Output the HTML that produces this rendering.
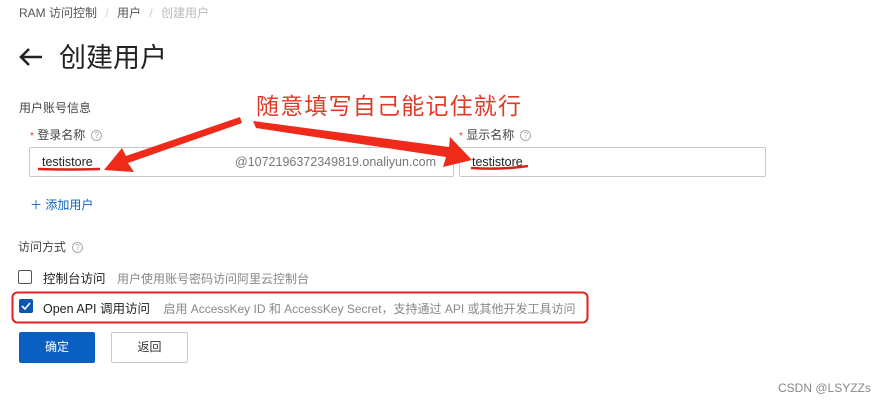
<!DOCTYPE html>
<html><head><meta charset="utf-8"><style>
body{margin:0;width:889px;height:403px;background:#fff;font-family:"Liberation Sans","Noto Sans CJK SC",sans-serif;position:relative;overflow:hidden;color:#333}
.a{position:absolute;white-space:nowrap}
.q{display:inline-block;width:9px;height:9px;border:1px solid #aaa;border-radius:50%;font-size:8px;line-height:9px;text-align:center;color:#aaa;vertical-align:middle;margin-left:6px}
.inp{position:absolute;border:1px solid #c8c8c8;border-radius:2px;height:30px;box-sizing:border-box}
</style></head><body>
<div class="a" style="left:19px;top:4px;font-size:12px;color:#555">RAM 访问控制 <span style="color:#ccc;margin:0 5px">/</span> 用户 <span style="color:#ccc;margin:0 5px">/</span> <span style="color:#bbb">创建用户</span></div>
<svg class="a" style="left:18px;top:46px" width="26" height="22" viewBox="0 0 26 22"><path d="M24 11H3M11 3L3 11l8 8" stroke="#222" stroke-width="2.6" fill="none"/></svg>
<div class="a" style="left:59px;top:36px;font-size:27px;color:#222">创建用户</div>
<div class="a" style="left:19px;top:99px;font-size:12px;color:#444">用户账号信息</div>
<div class="a" style="left:256px;top:87px;font-size:23px;color:#e03a26;letter-spacing:1.2px">随意填写自己能记住就行</div>
<div class="a" style="left:30px;top:126px;font-size:12px;color:#444"><span style="color:#e03a26;font-size:10px">*</span> 登录名称<span class="q">?</span></div>
<div class="a" style="left:459px;top:126px;font-size:12px;color:#444"><span style="color:#e03a26;font-size:10px">*</span> 显示名称<span class="q">?</span></div>
<div class="inp" style="left:29px;top:147px;width:425px"></div>
<div class="inp" style="left:459px;top:147px;width:307px"></div>
<div class="a" style="left:42px;top:155px;font-size:12.5px;color:#222">testistore</div>
<div class="a" style="left:235px;top:155px;font-size:12.5px;color:#777">@1072196372349819.onaliyun.com</div>
<div class="a" style="left:472px;top:155px;font-size:12.5px;color:#222">testistore</div>
<svg class="a" style="left:0;top:0" width="889" height="403">
<path d="M38 169 Q70 170 100 169" stroke="#e0201a" stroke-width="2.5" fill="none"/>
<path d="M471 168 Q500 170 528 166" stroke="#e0201a" stroke-width="2.5" fill="none"/>
<polygon points="240,117 242,123 128,163 134,172 104,170 122,148 126,156" fill="#f02a1a"/>
<polygon points="253,121 256,128 446,157 443,167 472,160 450,137 449,147" fill="#f02a1a"/>
<rect x="12.5" y="292.5" width="575" height="30" rx="5" fill="none" stroke="#e0201a" stroke-width="2"/>
</svg>
<div class="a" style="left:30px;top:196px;font-size:12px;color:#0b63c4">＋ 添加用户</div>
<div class="a" style="left:18px;top:238px;font-size:12px;color:#444">访问方式<span class="q">?</span></div>
<div class="a" style="left:18px;top:270px;width:12px;height:12px;border:1px solid #555;border-radius:2px"></div>
<div class="a" style="left:43px;top:268px;font-size:12.5px;color:#222">控制台访问 <span style="color:#888;margin-left:8px;font-size:12px">用户使用账号密码访问阿里云控制台</span></div>
<div class="a" style="left:19px;top:299px;width:14px;height:14px;background:#0b56b3;border-radius:2px"><svg width="14" height="14"><path d="M3 7l3 3 5-6" stroke="#fff" stroke-width="1.6" fill="none"/></svg></div>
<div class="a" style="left:43px;top:298px;font-size:12.5px;color:#222">Open API 调用访问 <span style="color:#888;margin-left:10px;font-size:12px">启用 AccessKey ID 和 AccessKey Secret，支持通过 API 或其他开发工具访问</span></div>
<div class="a" style="left:19px;top:332px;width:76px;height:31px;background:#0a5fc2;border-radius:2px;color:#fff;font-size:12px;line-height:31px;text-align:center">确定</div>
<div class="a" style="left:111px;top:332px;width:75px;height:29px;border:1px solid #c8c8c8;border-radius:2px;color:#333;font-size:12px;line-height:29px;text-align:center">返回</div>
<div class="a" style="left:778px;top:381px;font-size:12px;color:#888">CSDN @LSYZZs</div>
</body></html>
